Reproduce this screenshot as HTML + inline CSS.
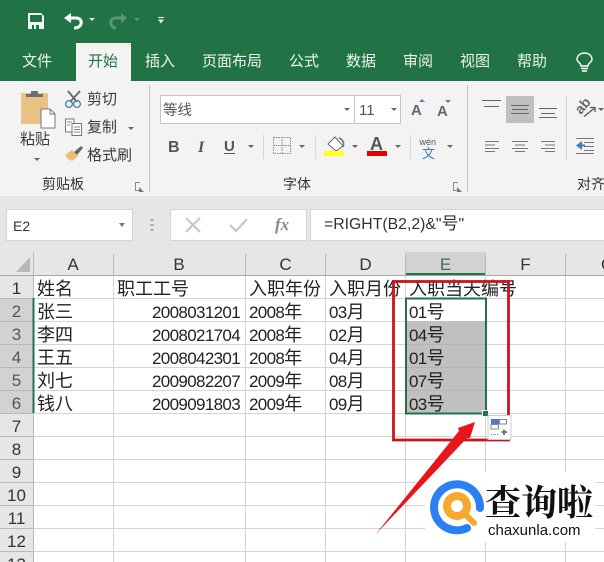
<!DOCTYPE html>
<html lang="zh"><head><meta charset="utf-8"><style>
html,body{margin:0;padding:0;background:#fff}
#p{position:relative;width:604px;height:562px;overflow:hidden;background:#fff;font-family:"Liberation Sans","Noto Sans CJK SC",sans-serif;color:#1c1c1c}
#p div{position:absolute;white-space:nowrap}
.t{color:#edf4ef;font-size:15px;line-height:20px;top:52px}
.r{color:#3a3a3a;font-size:15px;line-height:20px}
.g{color:#333;font-size:14px;line-height:18px;top:175px}
.h{background:#e6e6e6;text-align:center;color:#333;font-size:17px;line-height:26px;height:23px}
.w{background:none;left:0;width:33px;line-height:27px;height:23px;text-align:center;color:#333;font-size:17px}
.s{color:#555}
.c{font-size:18px;line-height:23px;color:#222}
.n{font-size:17px;letter-spacing:-.65px;line-height:23px;color:#222}
.n span{font-size:18px;letter-spacing:0}
svg{position:absolute;left:0;top:0}
</style></head><body><div id="p">
<div style="left:0;top:0;width:604px;height:81px;background:#217346"></div>
<div style="left:0;top:81px;width:604px;height:115px;background:#f3f3f4"></div>
<div style="left:0;top:196px;width:604px;height:56px;background:#e6e6e6"></div>
<div style="left:76px;top:43px;width:55px;height:38px;background:#f3f3f4"></div>
<div class="t" style="left:22px">文件</div>
<div class="t" style="left:88px;color:#217346">开始</div>
<div class="t" style="left:145px">插入</div>
<div class="t" style="left:202px">页面布局</div>
<div class="t" style="left:289px">公式</div>
<div class="t" style="left:346px">数据</div>
<div class="t" style="left:403px">审阅</div>
<div class="t" style="left:460px">视图</div>
<div class="t" style="left:517px">帮助</div>
<div class="r" style="left:20px;top:130px">粘贴</div>
<div class="r" style="left:87px;top:90px">剪切</div>
<div class="r" style="left:87px;top:118px">复制</div>
<div class="r" style="left:87px;top:146px">格式刷</div>
<div class="g" style="left:42px">剪贴板</div>
<div class="g" style="left:283px">字体</div>
<div class="g" style="left:577px">对齐方式</div>
<div style="left:160px;top:95px;width:193px;height:27px;background:#fff;border:1px solid #c6c6c6"></div>
<div style="left:354px;top:95px;width:45px;height:27px;background:#fff;border:1px solid #c6c6c6"></div>
<div style="left:163px;top:101px;font-size:14.5px;line-height:20px;color:#555">等线</div>
<div style="left:359px;top:101px;font-size:15px;line-height:20px;color:#555">11</div>
<div style="left:506px;top:96px;width:28px;height:27px;background:#c0c0c0"></div>
<div style="left:6px;top:209px;width:125px;height:30px;background:#fff;border:1px solid #d4d4d4"></div>
<div style="left:170px;top:209px;width:135px;height:30px;background:#fff;border:1px solid #d4d4d4"></div>
<div style="left:310px;top:209px;width:300px;height:30px;background:#fff;border:1px solid #d4d4d4"></div>
<div style="left:13px;top:216px;font-size:14px;line-height:20px;color:#333">E2</div>
<div style="left:324px;top:214px;font-size:15.8px;line-height:20px;color:#333">=RIGHT(B2,2)&amp;"<span style="font-size:17px">号</span>"</div>
<div style="left:275px;top:214px;font:italic bold 17px/22px 'Liberation Serif',serif;color:#888">fx</div>

<div class="h" style="left:0;top:252px;width:604px"></div>
<div class="h" style="left:33px;top:252px;width:80px">A</div>
<div class="h" style="left:113px;top:252px;width:132px">B</div>
<div class="h" style="left:245px;top:252px;width:81px">C</div>
<div class="h" style="left:326px;top:252px;width:79px">D</div>
<div class="h" style="left:405px;top:252px;width:81px;height:21px;background:#d2d2d2;color:#3e6f55;border-bottom:2px solid #217346">E</div>
<div class="h" style="left:486px;top:252px;width:79px">F</div>
<div class="h" style="left:565px;top:252px;width:60px;text-align:left;padding-left:36px">G</div>
<div style="left:0;top:275px;width:33px;height:287px;background:#e6e6e6"></div>
<div style="left:0;top:298px;width:33px;height:115px;background:#d2d2d2"></div>

<svg width="604" height="562" viewBox="0 0 604 562">
<g stroke="#d4d4d4" stroke-width="1" shape-rendering="crispEdges">
<path d="M0 275.5H604M33 298.5H604M33 321.5H604M33 344.5H604M33 367.5H604M33 390.5H604M33 413.5H604M33 436.5H604M33 459.5H604M33 482.5H604M33 505.5H604M33 528.5H604M33 551.5H604"/>
<path d="M113.5 275V562M245.5 275V562M325.5 275V562M405.5 275V562M485.5 275V562M565.5 275V562"/>
</g>
<g stroke="#b8b8b8" stroke-width="1" shape-rendering="crispEdges">
<path d="M0 298.5H33M0 321.5H33M0 344.5H33M0 367.5H33M0 390.5H33M0 413.5H33M0 436.5H33M0 459.5H33M0 482.5H33M0 505.5H33M0 528.5H33M0 551.5H33M33.5 252V562"/>
<path d="M113.5 254V275M245.5 254V275M325.5 254V275M405.5 254V275M485.5 254V275M565.5 254V275"/>
</g>
<path d="M0 275.5H604" stroke="#a8a8a8"/>
<path d="M33.5 298V413" stroke="#217346" stroke-width="2"/>
<path d="M30 257V272H16Z" fill="#b8b8b8"/>
<rect x="406" y="321" width="79" height="92" fill="#c0c0c0"/>
<path d="M406 344.5H485M406 367.5H485M406 390.5H485" stroke="#b4b4b4"/>
</svg>

<div class="w" style="top:275px">1</div>
<div class="w s" style="top:298px">2</div>
<div class="w s" style="top:321px">3</div>
<div class="w s" style="top:344px">4</div>
<div class="w s" style="top:367px">5</div>
<div class="w s" style="top:390px">6</div>
<div class="w" style="top:413px">7</div>
<div class="w" style="top:436px">8</div>
<div class="w" style="top:459px">9</div>
<div class="w" style="top:482px">10</div>
<div class="w" style="top:505px">11</div>
<div class="w" style="top:528px">12</div>
<div class="w" style="top:551px">13</div>

<div class="c" style="left:37px;top:278px">姓名</div>
<div class="c" style="left:117px;top:278px">职工工号</div>
<div class="c" style="left:249px;top:278px">入职年份</div>
<div class="c" style="left:329px;top:278px">入职月份</div>
<div class="c" style="left:409px;top:278px">入职当天编号</div>
<div class="c" style="left:37px;top:301px">张三</div>
<div class="c" style="left:37px;top:324px">李四</div>
<div class="c" style="left:37px;top:347px">王五</div>
<div class="c" style="left:37px;top:370px">刘七</div>
<div class="c" style="left:37px;top:393px">钱八</div>
<div class="n" style="left:152px;top:301px">2008031201</div>
<div class="n" style="left:152px;top:324px">2008021704</div>
<div class="n" style="left:152px;top:347px">2008042301</div>
<div class="n" style="left:152px;top:370px">2009082207</div>
<div class="n" style="left:152px;top:393px">2009091803</div>
<div class="n" style="left:249px;top:301px">2008<span>年</span></div>
<div class="n" style="left:249px;top:324px">2008<span>年</span></div>
<div class="n" style="left:249px;top:347px">2008<span>年</span></div>
<div class="n" style="left:249px;top:370px">2009<span>年</span></div>
<div class="n" style="left:249px;top:393px">2009<span>年</span></div>
<div class="n" style="left:329px;top:301px">03<span>月</span></div>
<div class="n" style="left:329px;top:324px">02<span>月</span></div>
<div class="n" style="left:329px;top:347px">04<span>月</span></div>
<div class="n" style="left:329px;top:370px">08<span>月</span></div>
<div class="n" style="left:329px;top:393px">09<span>月</span></div>
<div class="n" style="left:409px;top:301px">01<span>号</span></div>
<div class="n" style="left:409px;top:324px">04<span>号</span></div>
<div class="n" style="left:409px;top:347px">01<span>号</span></div>
<div class="n" style="left:409px;top:370px">07<span>号</span></div>
<div class="n" style="left:409px;top:393px">03<span>号</span></div>

<div style="left:425px;top:472px;width:170px;height:70px;background:#fff"></div>

<svg width="604" height="562" viewBox="0 0 604 562">
<!-- QAT -->
<path d="M28 13H41L44 16V29H28Z" fill="#f4f8f5"/>
<rect x="30" y="15" width="12" height="7" fill="#217346"/>
<rect x="32" y="25" width="7" height="4" fill="#217346"/><rect x="34" y="25" width="2" height="4" fill="#f4f8f5"/>
<path d="M68 18H76C80 18 82 21 81 24C80 27 77 28 74 28" fill="none" stroke="#fff" stroke-width="3"/>
<path d="M64 18L71 13V23Z" fill="#fff"/>
<path d="M89 18H95L92 21Z" fill="#dfe9e3"/>
<path d="M124 18H116C112 18 110 21 111 24C112 27 114 28 116 28" fill="none" stroke="#5c9678" stroke-width="3"/>
<path d="M127 18L121 13V23Z" fill="#5c9678"/>
<path d="M134 18H140L137 21Z" fill="#5c9678"/>
<path d="M158 17.500H164" stroke="#eee"/><path d="M158 19.500H164L161 23.500Z" fill="#eee"/>
<!-- bulb -->
<path d="M581 66C581 63 577 62 577 59.500C577 55.500 580.500 53 584.500 53C588.500 53 592 55.500 592 59.500C592 62 588 63 588 66Z" fill="none" stroke="#fff" stroke-width="1.400"/>
<path d="M581 68.500H588M582 71H587" stroke="#fff" stroke-width="1.500"/>
<!-- clipboard -->
<rect x="21" y="93" width="27" height="31" rx="1" fill="#eac384"/>
<path d="M26 97V94H31V91H38V94H43V97Z" fill="#6f6f6f"/>
<path d="M41 109H50L55 114V128H41Z" fill="#fff" stroke="#777"/>
<path d="M50 109V114H55" fill="none" stroke="#777"/>
<path d="M34 158H40L37 161Z" fill="#666"/>
<!-- scissors -->
<path d="M68 91L77 102M80 91L70 102" stroke="#666" stroke-width="1.800" fill="none"/>
<circle cx="69" cy="104" r="3.400" fill="none" stroke="#4d86b5" stroke-width="1.400"/>
<circle cx="77" cy="104" r="3.400" fill="none" stroke="#4d86b5" stroke-width="1.400"/>
<!-- copy -->
<path d="M65.500 119H74V132H65.500Z" fill="#fff" stroke="#777"/>
<path d="M72 123.500H81.500V135.500H72Z" fill="#fff" stroke="#777"/>
<path d="M74 127H80M74 129.500H80M74 132H80M67 122H72M67 125H70" stroke="#888"/>
<path d="M128 127H134L131 130Z" fill="#666"/>
<!-- brush -->
<path d="M65 155L72 150L78 156L72 161C70 160 67 159 65 155Z" fill="#eebc78"/>
<path d="M74 152L81 146L83 148L77 155Z" fill="#666"/>
<!-- launchers -->
<path d="M135 182.500H140M135.500 182V190M135 190.500H139" stroke="#888" fill="none"/><path d="M139 187L144 192H139Z" fill="#777"/>
<path d="M453 182.500H458M453.500 182V190M453 190.500H457" stroke="#888" fill="none"/><path d="M457 187L462 192H457Z" fill="#777"/>
<!-- separators -->
<path d="M149.500 85V192M467.500 85V192" stroke="#c4c4c4"/>
<path d="M263.500 135V159M315.500 135V159M410.500 135V159M566.500 96V160" stroke="#d6d6d6"/>
<!-- dropdowns -->
<g fill="#666">
<path d="M344 108H350L347 111Z"/><path d="M391 108H397L394 111Z"/>
<path d="M248 145H254L251 148Z"/><path d="M299 145H305L302 148Z"/><path d="M352 145H358L355 148Z"/><path d="M395 145H401L398 148Z"/><path d="M447 145H453L450 148Z"/><path d="M598 108H604L601 111Z"/>
<path d="M119 223H125L122 227Z" fill="#777"/>
</g>
<!-- A grow/shrink -->
<text x="411" y="115" font-family="Liberation Sans" font-size="15" font-weight="bold" fill="#666">A</text>
<text x="437" y="116" font-family="Liberation Sans" font-size="15" font-weight="bold" fill="#666">A</text>
<path d="M419 102H425L422 99Z" fill="#5a7fa8"/><path d="M445 100H451L448 103Z" fill="#5a7fa8"/>
<!-- B I U -->
<text x="168" y="152" font-family="Liberation Sans" font-size="16" font-weight="bold" fill="#555">B</text>
<text x="198" y="152" font-family="Liberation Serif" font-size="16" font-weight="bold" font-style="italic" fill="#555">I</text>
<text x="224" y="151" font-family="Liberation Sans" font-size="15" font-weight="bold" fill="#555">U</text>
<path d="M224 153.500H235" stroke="#555"/>
<!-- borders -->
<path d="M273.500 137.500H290.500V153.500H273.500ZM282 137V154M273 145.500H291" fill="none" stroke="#888" stroke-dasharray="1.500 1"/>
<!-- fill colour -->
<path d="M328 144L335 137L343 146L336 151Z" fill="#fff" stroke="#666"/>
<path d="M339 138C344 140 344 144 343 147" fill="none" stroke="#4e7ea8" stroke-width="1.600"/>
<rect x="324" y="151" width="20" height="5" fill="#ffff20"/>
<!-- font colour -->
<text x="370" y="150" font-family="Liberation Sans" font-size="18" font-weight="bold" fill="#555">A</text>
<rect x="367" y="151" width="20" height="5" fill="#e00000"/>
<!-- wen -->
<text x="419.500" y="145" font-family="Liberation Sans" font-size="9" fill="#555">wén</text>
<text x="422" y="158" font-family="Noto Sans CJK SC" font-size="13" fill="#3f7fb5">文</text>
<!-- align top row -->
<path d="M482 100.500H501M484 106.500H499" stroke="#666"/>
<path d="M511 105.500H529M512 109.500H528M511 113.500H529" stroke="#666"/>
<path d="M539 108.500H557M541 113.500H555M539 117.500H557" stroke="#666"/>
<text x="0" y="0" font-family="Liberation Sans" font-size="14" font-weight="bold" fill="#666" transform="translate(581 115) rotate(-50)">ab</text>
<path d="M584 116.500L594 108.500M590 107.500H595V112" fill="none" stroke="#555" stroke-width="1.300"/>
<path d="M485 141.500H499M485 145H495M485 148.500H499M485 151.500H495" stroke="#777"/>
<path d="M512 141.500H528M515 145H525M512 148.500H528M515 151.500H525" stroke="#777"/>
<path d="M541 141.500H555M545 145H555M541 148.500H555M545 151.500H555" stroke="#777"/>
<path d="M576 138.500H594M584 142.500H594M584 146.500H594M584 150.500H594M576 153.500H594" stroke="#777"/>
<path d="M576 145.500L582 141V150Z" fill="#3f7fb5"/><path d="M580 145.500H585" stroke="#3f7fb5" stroke-width="2"/>
<!-- formula bar icons -->
<path d="M152 219V221M152 224V226M152 229V231" stroke="#aaa" stroke-width="3"/>
<path d="M186 218L200 232M200 218L186 232" stroke="#c6c6c6" stroke-width="2"/>
<path d="M230 225L236 231L247 219" fill="none" stroke="#c6c6c6" stroke-width="2.200"/>
<!-- selection -->
<rect x="406" y="298.500" width="80" height="115" fill="none" stroke="#217346" stroke-width="2"/>
<rect x="482" y="410" width="7" height="7" fill="#fff"/>
<rect x="483" y="411" width="5" height="5" fill="#217346"/>
<!-- red box -->
<rect x="393.500" y="281.500" width="115" height="158.500" fill="none" stroke="#c8161d" stroke-width="2.800"/>
<!-- paste options -->
<rect x="488" y="415.500" width="23" height="24" fill="#fff" stroke="#d0c8d8"/>
<rect x="491" y="419" width="8" height="5" fill="#4a78d8"/>
<path d="M499.500 419.500H506.500V424H499.500ZM491 424.500H498.500V429H491Z" fill="#fff" stroke="#888"/>
<path d="M491 434.500H498" stroke="#888" stroke-dasharray="1 1"/>
<path d="M501.500 432H507M504 429.500V435" stroke="#777" stroke-width="2"/>
<!-- arrow -->
<path d="M375 535L459 431L458 428L475 422L470 438L467 438Z" fill="#e8151b"/>
<!-- logo -->
<path d="M467 528A23 23 0 1 1 480 508" fill="none" stroke="#2a7ff2" stroke-width="8" stroke-linecap="round"/>
<circle cx="457" cy="506" r="10" fill="none" stroke="#f8a830" stroke-width="8"/>
<path d="M465 514L474 523" stroke="#f8a830" stroke-width="6" stroke-linecap="round"/>
</svg>
<div style="left:485px;top:477px;font-family:'Noto Serif CJK SC',serif;font-weight:700;font-size:36px;line-height:48px;color:#111">查询啦</div>
<div style="left:488px;top:522px;font-size:15px;line-height:18px;color:#111">chaxunla.com</div>
</div></body></html>
